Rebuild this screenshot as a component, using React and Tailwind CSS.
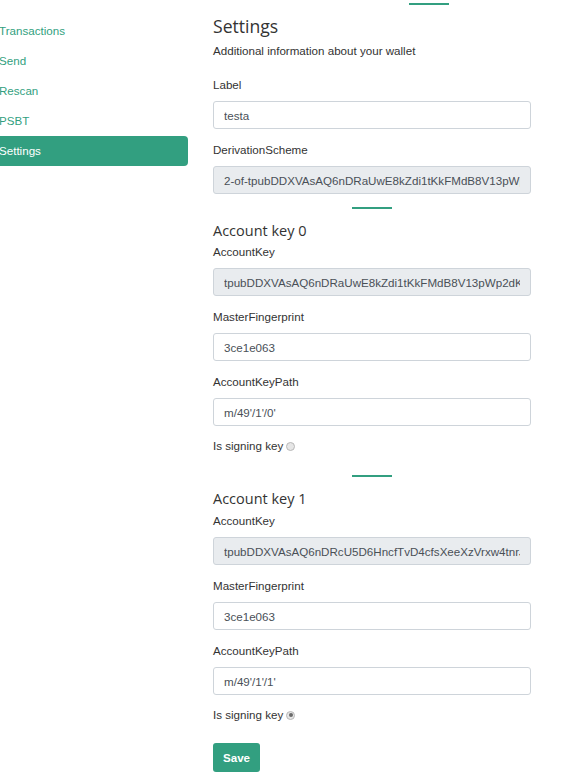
import React from "react";

const font = { fontFamily: '"Liberation Sans", Arial, sans-serif' };

function Field({ label, value, disabled, last }) {
  return (
    <div className={last ? "mb-[12px]" : "mb-[13px]"}>
      <div className="h-[16px] leading-[16px] text-[11.6px] text-[#333] mb-[8px]">{label}</div>
      <input
        readOnly
        value={value}
        className={`block w-full h-[28px] px-[10px] rounded-[3px] border border-[#ced4da] text-[11.6px] text-[#495057] outline-none ${
          disabled ? "bg-[#e9ecef]" : "bg-white"
        }`}
        style={font}
      />
    </div>
  );
}

function Radio({ checked }) {
  return (
    <span className="inline-flex items-center justify-center w-[9px] h-[9px] rounded-full border border-[#b8b8b8] bg-[#e6e6e6] ml-[3px]">
      {checked && <span className="w-[4px] h-[4px] rounded-full bg-[#6b6b6b]" />}
    </span>
  );
}

function Divider({ className = "" }) {
  return <div className={`h-[2px] w-[40px] bg-[#329f80] mx-auto ${className}`} />;
}

function AccountKey({ index, keyValue, path, signing }) {
  return (
    <>
      <div
        className="mt-[13px] h-[18px] leading-[18px] text-[14.5px] text-[#333]"
        style={{ fontFamily: '"Open Sans", sans-serif' }}
      >
        Account key {index}
      </div>
      <div className={index === 0 ? "mt-[4px]" : "mt-[5px]"}>
        <Field label="AccountKey" value={keyValue} disabled />
        <Field label="MasterFingerprint" value="3ce1e063" />
        <Field label="AccountKeyPath" value={path} last />
        <div className="h-[16px] leading-[16px] text-[11.6px] text-[#333] flex items-center">
          Is signing key
          <Radio checked={signing} />
        </div>
      </div>
    </>
  );
}

export default function App() {
  const items = ["Transactions", "Send", "Rescan", "PSBT", "Settings"];
  return (
    <div className="w-[581px] h-[779px] bg-white flex overflow-hidden" style={font}>
      <nav className="w-[189px] ml-[-1px] pt-[16px] shrink-0">
        {items.map((it) => (
          <div
            key={it}
            className={`h-[30px] leading-[30px] text-[11.6px] rounded-r-[4px] ${
              it === "Settings" ? "bg-[#329f80] text-white" : "text-[#329f80]"
            }`}
          >
            {it}
          </div>
        ))}
      </nav>
      <main className="ml-[25px] w-[318px] shrink-0 pt-[3px]">
        <div className="h-[2px] w-[40px] bg-[#329f80] ml-[196px]" />
        <div
          className="mt-[11px] h-[21px] leading-[21px] text-[17.6px] text-[#333]"
          style={{ fontFamily: '"Open Sans", sans-serif' }}
        >
          Settings
        </div>
        <div className="mt-[5px] h-[17px] leading-[17px] text-[11.6px] text-[#333]">
          Additional information about your wallet
        </div>
        <div className="mt-[18px]">
          <Field label="Label" value="testa" />
          <Field
            label="DerivationScheme"
            value="2-of-tpubDDXVAsAQ6nDRaUwE8kZdi1tKkFMdB8V13pWp2dKExampleXpub-tpubDDXVAsAQ6nDRcU5D6HncfTvD4cfsXeeXzVrxw4tnrJ"
            disabled
          />
        </div>
        <Divider className="mt-[1px]" />
        <AccountKey
          index={0}
          keyValue="tpubDDXVAsAQ6nDRaUwE8kZdi1tKkFMdB8V13pWp2dKzQ7hXz"
          path="m/49'/1'/0'"
          signing={false}
        />
        <Divider className="mt-[21px]" />
        <AccountKey
          index={1}
          keyValue="tpubDDXVAsAQ6nDRcU5D6HncfTvD4cfsXeeXzVrxw4tnrJkLm2Q"
          path="m/49'/1'/1'"
          signing={true}
        />
        <button
          className="mt-[20px] h-[29px] w-[47px] rounded-[3px] bg-[#329f80] text-white text-[11.6px] font-bold"
          style={font}
        >
          Save
        </button>
      </main>
    </div>
  );
}
